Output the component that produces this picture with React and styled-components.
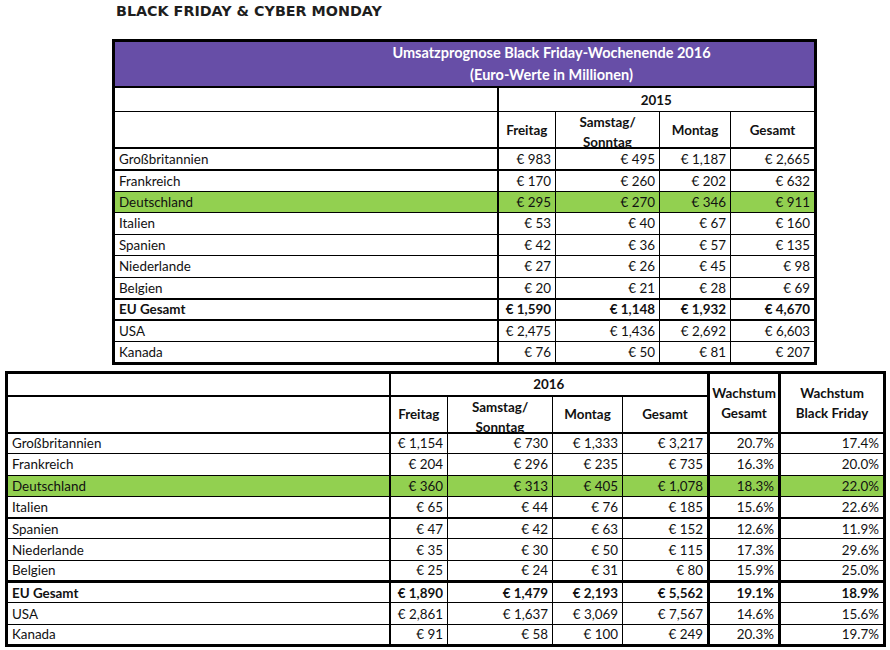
import React from 'react';
import styled, { createGlobalStyle } from 'styled-components';

const GlobalStyle = createGlobalStyle`
  html, body {
    margin: 0;
    padding: 0;
    background: #ffffff;
  }
`;

const Page = styled.div`
  width: 890px;
  height: 650px;
  overflow: hidden;
  display: flex;
  flex-direction: column;
  font-family: Lato, 'Liberation Sans', sans-serif;
  color: #111;
`;

const Title = styled.h1`
  margin: 3px 0 0 116px;
  font-family: 'DejaVu Sans', Verdana, sans-serif;
  font-size: 14.3px;
  font-weight: bold;
  line-height: 16px;
  color: #1e1e1e;
`;

const Table = styled.table`
  border-collapse: collapse;
  table-layout: fixed;
  width: ${p => p.$width}px;
  margin: ${p => p.$margin};
  border: 3px solid #000;
  font-size: 13.4px;
`;

const Banner = styled.td`
  background: #674ea7;
  color: #fff;
  font-weight: bold;
  font-size: 14.5px;
  text-align: center;
  line-height: 22px;
  height: 44px;
  padding: 0 0 0 174px;
  border-bottom: 2px solid #000;
`;

const YearCell = styled.th`
  height: ${p => p.$height}px;
  padding: 0;
  font-weight: bold;
  text-align: center;
  border: 1px solid #000;
  border-left: 2px solid #000;
  border-bottom-width: ${p => p.$bottom || 1}px;
`;

const BlankCell = styled.td`
  padding: 0;
  border-right: 2px solid #000;
  border-bottom: ${p => p.$bottom || 1}px solid #000;
`;

const HeadCell = styled.th`
  height: ${p => p.$height || 35}px;
  padding: 0;
  font-weight: bold;
  text-align: center;
  line-height: 20px;
  vertical-align: ${p => (p.$top2 ? 'top' : 'middle')};
  border-bottom: 2px solid #000;
  border-left: ${p => p.$left || 1}px solid #000;
  border-right: ${p => p.$right || 1}px solid #000;
  border-top: ${p => p.$top || 1}px solid #000;
`;

// the two-line label spills over the rule below it, as in the sheet
const Squeezed = styled.div`
  position: relative;
  z-index: 1;
  height: 20px;
  line-height: 20px;
  overflow: visible;
`;

const Row = styled.tr`
  height: ${p => p.$height}px;
  background: ${p => (p.$green ? '#92d050' : '#fff')};
  font-weight: ${p => (p.$bold ? 'bold' : 'normal')};

  & > td {
    border-bottom: ${p => p.$bottom || 1}px solid #000;
  }
`;

const NameCell = styled.td`
  padding: 0 4px;
  text-align: left;
  white-space: nowrap;
  border-right: 2px solid #000;
  line-height: 18px;
`;

const NumCell = styled.td`
  padding: 0 4px;
  text-align: right;
  white-space: nowrap;
  border-right: ${p => p.$right || 1}px solid #000;
  line-height: 18px;
`;

const rows2015 = [
  ['Großbritannien', '€ 983', '€ 495', '€ 1,187', '€ 2,665'],
  ['Frankreich', '€ 170', '€ 260', '€ 202', '€ 632'],
  ['Deutschland', '€ 295', '€ 270', '€ 346', '€ 911'],
  ['Italien', '€ 53', '€ 40', '€ 67', '€ 160'],
  ['Spanien', '€ 42', '€ 36', '€ 57', '€ 135'],
  ['Niederlande', '€ 27', '€ 26', '€ 45', '€ 98'],
  ['Belgien', '€ 20', '€ 21', '€ 28', '€ 69'],
  ['EU Gesamt', '€ 1,590', '€ 1,148', '€ 1,932', '€ 4,670'],
  ['USA', '€ 2,475', '€ 1,436', '€ 2,692', '€ 6,603'],
  ['Kanada', '€ 76', '€ 50', '€ 81', '€ 207'],
];

const rows2016 = [
  ['Großbritannien', '€ 1,154', '€ 730', '€ 1,333', '€ 3,217', '20.7%', '17.4%'],
  ['Frankreich', '€ 204', '€ 296', '€ 235', '€ 735', '16.3%', '20.0%'],
  ['Deutschland', '€ 360', '€ 313', '€ 405', '€ 1,078', '18.3%', '22.0%'],
  ['Italien', '€ 65', '€ 44', '€ 76', '€ 185', '15.6%', '22.6%'],
  ['Spanien', '€ 47', '€ 42', '€ 63', '€ 152', '12.6%', '11.9%'],
  ['Niederlande', '€ 35', '€ 30', '€ 50', '€ 115', '17.3%', '29.6%'],
  ['Belgien', '€ 25', '€ 24', '€ 31', '€ 80', '15.9%', '25.0%'],
  ['EU Gesamt', '€ 1,890', '€ 1,479', '€ 2,193', '€ 5,562', '19.1%', '18.9%'],
  ['USA', '€ 2,861', '€ 1,637', '€ 3,069', '€ 7,567', '14.6%', '15.6%'],
  ['Kanada', '€ 91', '€ 58', '€ 100', '€ 249', '20.3%', '19.7%'],
];

// thickness of the line under each data row
const bottomTop = [2, 1, 1, 1, 1, 1, 2, 2, 1, 1];
const bottomBottom = [1, 1, 1, 2, 1, 1, 3, 1, 1, 1];

const SamstagLabel = () => (
  <Squeezed>
    Samstag/
    <br />
    Sonntag
  </Squeezed>
);

const Forecast2015 = () => (
  <Table $width={705} $margin="20px 0 0 112px">
    <colgroup>
      <col style={{ width: 384 }} />
      <col style={{ width: 58 }} />
      <col style={{ width: 104 }} />
      <col style={{ width: 71 }} />
      <col />
    </colgroup>
    <thead>
      <tr>
        <Banner colSpan={5}>
          Umsatzprognose Black Friday-Wochenende 2016
          <br />
          (Euro-Werte in Millionen)
        </Banner>
      </tr>
      <tr>
        <BlankCell />
        <YearCell colSpan={4} $height={23}>2015</YearCell>
      </tr>
      <tr>
        <HeadCell $left={3} $right={2} />
        <HeadCell>Freitag</HeadCell>
        <HeadCell $top2>
          <SamstagLabel />
        </HeadCell>
        <HeadCell>Montag</HeadCell>
        <HeadCell>Gesamt</HeadCell>
      </tr>
    </thead>
    <tbody>
      {rows2015.map((r, i) => (
        <Row
          key={r[0]}
          $height={21.5}
          $green={r[0] === 'Deutschland'}
          $bold={r[0] === 'EU Gesamt'}
          $bottom={bottomTop[i]}
        >
          <NameCell>{r[0]}</NameCell>
          {r.slice(1).map((v, j) => (
            <NumCell key={j}>{v}</NumCell>
          ))}
        </Row>
      ))}
    </tbody>
  </Table>
);

const Forecast2016 = () => (
  <Table $width={881} $margin="6px 0 0 5px">
    <colgroup>
      <col style={{ width: 383 }} />
      <col style={{ width: 58 }} />
      <col style={{ width: 105 }} />
      <col style={{ width: 70 }} />
      <col style={{ width: 86 }} />
      <col style={{ width: 71 }} />
      <col />
    </colgroup>
    <thead>
      <tr>
        <BlankCell $bottom={2} />
        <YearCell colSpan={4} $bottom={2} $height={21}>2016</YearCell>
        <HeadCell rowSpan={2} $left={3} $right={3} $top={3}>
          Wachstum
          <br />
          Gesamt
        </HeadCell>
        <HeadCell rowSpan={2} $left={3} $right={3} $top={3}>
          Wachstum
          <br />
          Black Friday
        </HeadCell>
      </tr>
      <tr>
        <HeadCell $left={3} $right={2} />
        <HeadCell>Freitag</HeadCell>
        <HeadCell $top2>
          <SamstagLabel />
        </HeadCell>
        <HeadCell>Montag</HeadCell>
        <HeadCell $right={3}>Gesamt</HeadCell>
      </tr>
    </thead>
    <tbody>
      {rows2016.map((r, i) => (
        <Row
          key={r[0]}
          $height={21.3}
          $green={r[0] === 'Deutschland'}
          $bold={r[0] === 'EU Gesamt'}
          $bottom={bottomBottom[i]}
        >
          <NameCell>{r[0]}</NameCell>
          {r.slice(1).map((v, j) => (
            <NumCell key={j} $right={j === 3 || j === 4 ? 3 : 1}>
              {v}
            </NumCell>
          ))}
        </Row>
      ))}
    </tbody>
  </Table>
);

export default function App() {
  return (
    <>
      <GlobalStyle />
      <Page>
        <Title>BLACK FRIDAY &amp; CYBER MONDAY</Title>
        <Forecast2015 />
        <Forecast2016 />
      </Page>
    </>
  );
}
